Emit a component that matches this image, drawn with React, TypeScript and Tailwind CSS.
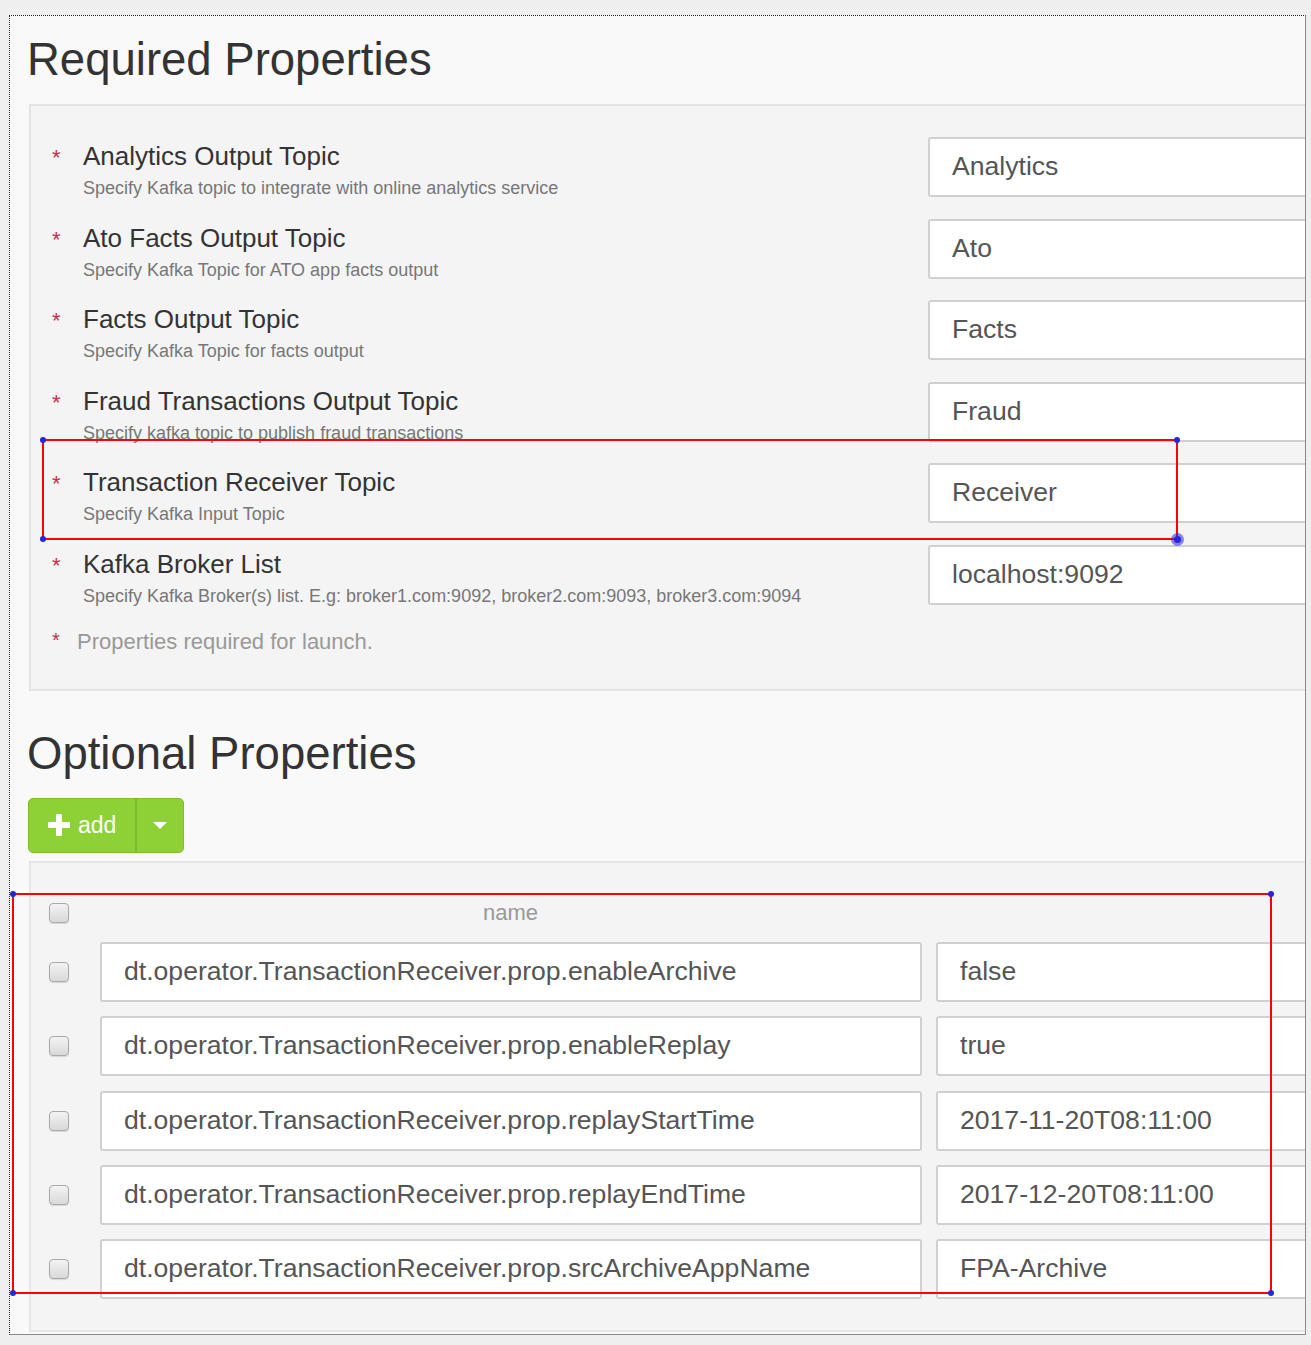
const required = [
  { label: "Analytics Output Topic", desc: "Specify Kafka topic to integrate with online analytics service", value: "Analytics" },
  { label: "Ato Facts Output Topic", desc: "Specify Kafka Topic for ATO app facts output", value: "Ato" },
  { label: "Facts Output Topic", desc: "Specify Kafka Topic for facts output", value: "Facts" },
  { label: "Fraud Transactions Output Topic", desc: "Specify kafka topic to publish fraud transactions", value: "Fraud" },
  { label: "Transaction Receiver Topic", desc: "Specify Kafka Input Topic", value: "Receiver" },
  {
    label: "Kafka Broker List",
    desc: "Specify Kafka Broker(s) list. E.g: broker1.com:9092, broker2.com:9093, broker3.com:9094",
    value: "localhost:9092",
  },
];

const optional = [
  { name: "dt.operator.TransactionReceiver.prop.enableArchive", value: "false" },
  { name: "dt.operator.TransactionReceiver.prop.enableReplay", value: "true" },
  { name: "dt.operator.TransactionReceiver.prop.replayStartTime", value: "2017-11-20T08:11:00" },
  { name: "dt.operator.TransactionReceiver.prop.replayEndTime", value: "2017-12-20T08:11:00" },
  { name: "dt.operator.TransactionReceiver.prop.srcArchiveAppName", value: "FPA-Archive" },
];

function Checkbox() {
  return (
    <div className="w-[20px] h-[20px] rounded-[4px] border border-[#a9a9a9] bg-gradient-to-b from-[#f3f3f3] to-[#d9d9d9] shadow-[0_1px_1px_rgba(0,0,0,0.12)]" />
  );
}

function TextBox({ value, className }: { value: string; className: string }) {
  return (
    <div
      className={`h-[60px] shrink-0 flex items-center bg-white border-2 border-[#d0d0d0] rounded-[3px] pl-[22px] text-[26.6px] text-[#555] ${className}`}
    >
      {value}
    </div>
  );
}

function Dot({ x, y, big }: { x: number; y: number; big?: boolean }) {
  if (big) {
    return (
      <div
        className="absolute w-[13px] h-[13px] -ml-[6.5px] -mt-[6.5px] rounded-full bg-[rgba(40,40,220,0.55)] flex items-center justify-center"
        style={{ left: x, top: y }}
      >
        <div className="w-[7px] h-[7px] rounded-full bg-[#2626d6]" />
      </div>
    );
  }
  return (
    <div
      className="absolute w-[6px] h-[6px] -ml-[3px] -mt-[3px] rounded-full bg-[#2626d6]"
      style={{ left: x, top: y }}
    />
  );
}

function Marker({ x1, y1, x2, y2, bigCorner }: { x1: number; y1: number; x2: number; y2: number; bigCorner?: boolean }) {
  return (
    <>
      <div
        className="absolute border-2 border-[#ff0000] pointer-events-none"
        style={{ left: x1 - 1, top: y1 - 1, width: x2 - x1 + 2, height: y2 - y1 + 2 }}
      />
      <Dot x={x1} y={y1} />
      <Dot x={x2} y={y1} />
      <Dot x={x1} y={y2} />
      <Dot x={x2} y={y2} big={bigCorner} />
    </>
  );
}

export default function App() {
  return (
    <div className="relative min-h-[1345px] bg-[#efefef] pt-[15px] pl-[9px] font-['Liberation_Sans',Arial,sans-serif]">
      <div className="w-[1297px] h-[1320px] overflow-hidden bg-[#f9f9f9] border border-[#8a8a8a] [border-top-style:dotted] [border-left-style:dotted] border-t-[#222] border-l-[#222] pl-[19px]">
        <h1 className="mt-[17px] -ml-[2px] text-[45.5px] leading-[53px] text-[#333]">Required Properties</h1>

        <div className="mt-[18px] w-[1320px] border-2 border-[#e3e3e3] bg-[#f4f4f4] pt-[32px] pb-[31px] pl-[21px]">
          <div className="flex flex-col gap-[17.6px]">
            {required.map((r) => (
              <div key={r.label} className="flex items-start">
                <div className="w-[31px] pt-[4px] text-[22px] leading-[32px] text-[#c0304a]">*</div>
                <div className="w-[845px] shrink-0">
                  <div className="text-[26px] leading-[36px] text-[#333]">{r.label}</div>
                  <div className="text-[18px] leading-[28px] text-[#777]">{r.desc}</div>
                </div>
                <TextBox value={r.value} className="w-[400px] -mt-[1px]" />
              </div>
            ))}
          </div>
          <div className="mt-[16px] flex items-start">
            <span className="w-[25px] text-[20px] leading-[28px] text-[#c0304a]">*</span>
            <span className="text-[22px] leading-[32px] text-[#999]">Properties required for launch.</span>
          </div>
        </div>

        <h2 className="mt-[36px] -ml-[2px] text-[45.5px] leading-[53px] text-[#333]">Optional Properties</h2>

        <div className="mt-[18px] inline-flex h-[55px] -ml-[1px] rounded-[5px] border border-[#7fbd2f] bg-[#8ed137] text-white overflow-hidden">
          <div className="flex items-center gap-[8px] pl-[19px] pr-[19px] border-r-2 border-[#7cbb2c]">
            <svg width="22" height="22" viewBox="0 0 22 22" fill="white">
              <rect x="8" y="0" width="6" height="22" rx="1" />
              <rect x="0" y="8" width="22" height="6" rx="1" />
            </svg>
            <span className="text-[23px] leading-none">add</span>
          </div>
          <div className="flex items-center justify-center w-[46px]">
            <div className="w-0 h-0 border-l-[7px] border-r-[7px] border-t-[7px] border-l-transparent border-r-transparent border-t-white" />
          </div>
        </div>

        <div className="mt-[8px] w-[1320px] border-2 border-[#e6e6e6] bg-[#f4f4f4] pt-[29px] pb-[31px] pl-[18px]">
          <div className="flex items-center h-[42px] mb-[8px]">
            <div className="w-[20px]">
              <Checkbox />
            </div>
            <div className="ml-[31px] w-[821px] text-center text-[22px] text-[#999]">name</div>
          </div>
          <div className="flex flex-col gap-[14.3px]">
            {optional.map((o) => (
              <div key={o.name} className="flex items-center">
                <div className="w-[20px]">
                  <Checkbox />
                </div>
                <TextBox value={o.name} className="ml-[31px] w-[822px]" />
                <TextBox value={o.value} className="ml-[14px] w-[400px]" />
              </div>
            ))}
          </div>
        </div>
      </div>

      <Marker x1={43} y1={440} x2={1177} y2={539} bigCorner />
      <Marker x1={13} y1={894} x2={1271} y2={1293} />
    </div>
  );
}
